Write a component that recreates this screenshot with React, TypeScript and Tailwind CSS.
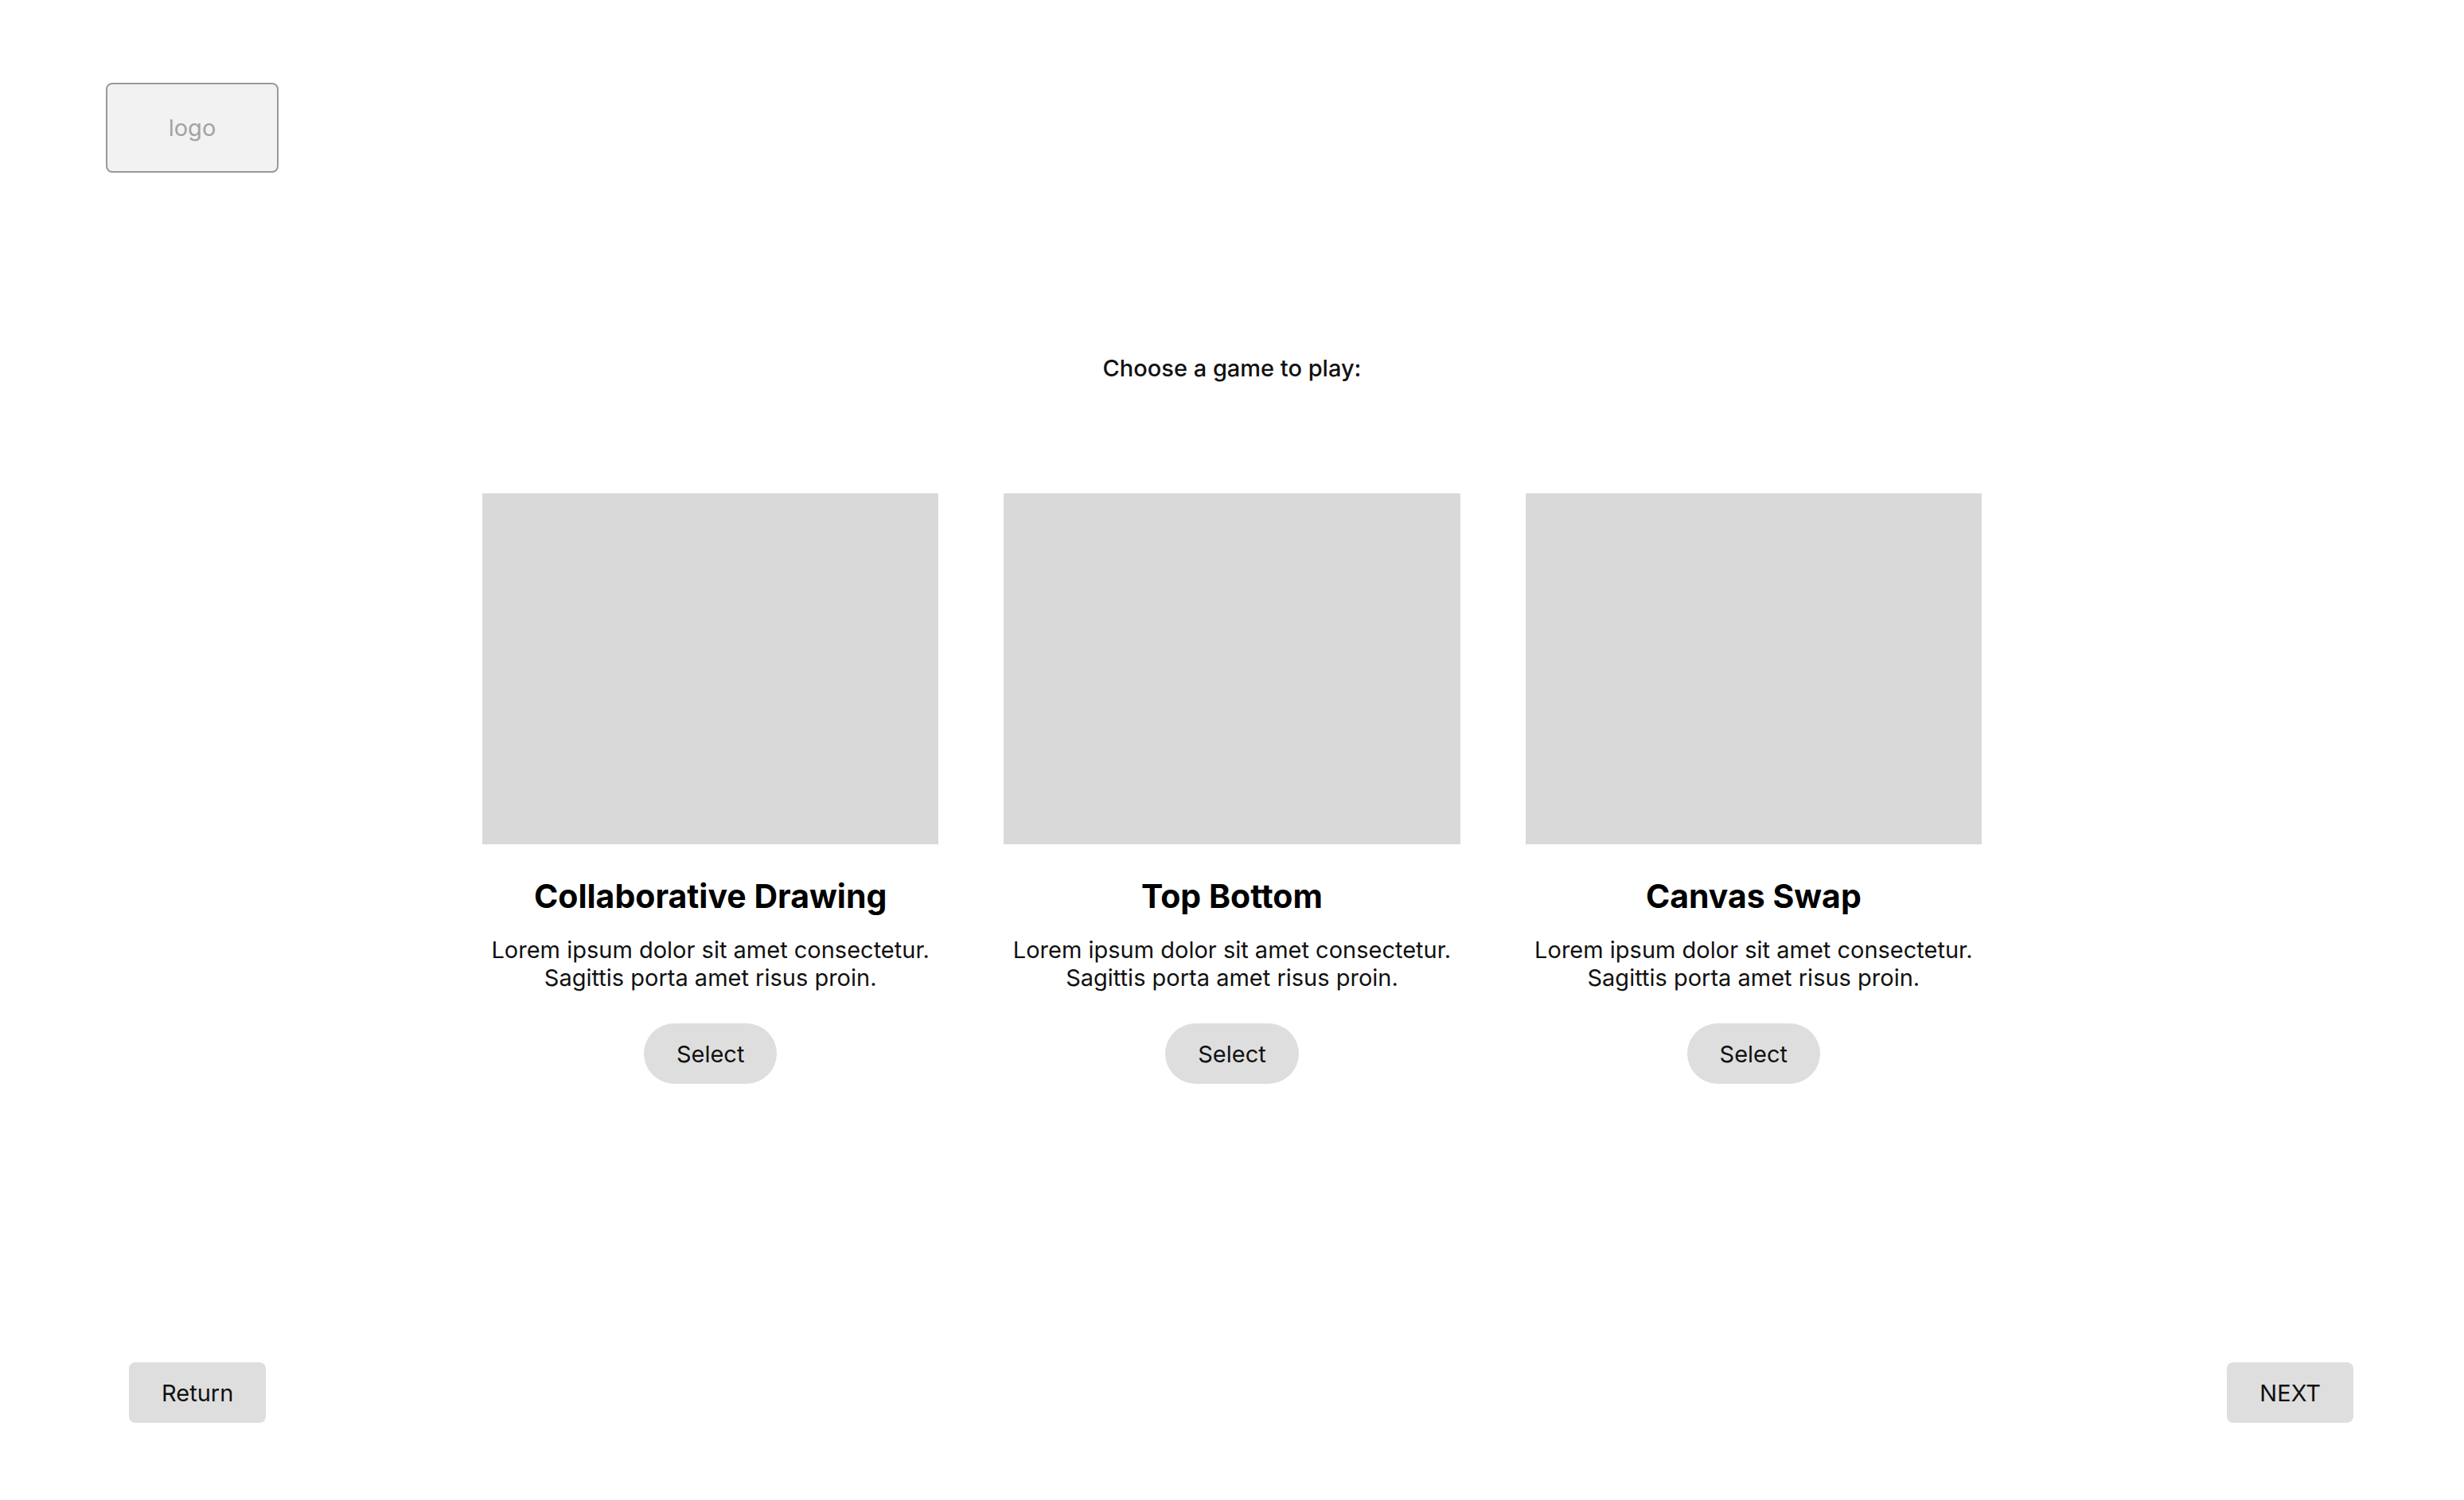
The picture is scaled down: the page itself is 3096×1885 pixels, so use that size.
const games = ['Collaborative Drawing', 'Top Bottom', 'Canvas Swap'];

export default function App() {
  return (
    <div className="flex min-h-screen flex-col bg-white font-['Inter',sans-serif] text-[29px] leading-[35px] text-[#111111]">
      <header className="flex px-[133px] pt-[104px]">
        <div className="flex h-[113px] w-[217px] items-center justify-center rounded-lg border-2 border-[#999999] bg-[#f2f2f2] text-[#a3a3a3]">
          logo
        </div>
      </header>
      <main className="flex flex-col items-center pt-[228px]">
        <h1 className="font-medium">Choose a game to play:</h1>
        <div className="mt-[140px] grid w-full max-w-[1884px] grid-cols-3 gap-[82px]">
          {games.map((game) => (
            <section key={game} className="flex flex-col items-center text-center">
              <div className="h-[441px] w-full bg-[#d9d9d9]" />
              <h2 className="mt-10 text-[41px] leading-[50px] font-bold text-black">{game}</h2>
              <p className="mt-[25px]">
                Lorem ipsum dolor sit amet consectetur. Sagittis porta amet risus proin.
              </p>
              <button type="button" className="mt-10 h-[76px] rounded-full bg-[#dedede] px-[41px]">
                Select
              </button>
            </section>
          ))}
        </div>
      </main>
      <footer className="mt-auto flex justify-between pr-[139px] pb-[97px] pl-[162px]">
        <button type="button" className="h-[76px] rounded-lg bg-[#dedede] px-[41px]">
          Return
        </button>
        <button type="button" className="h-[76px] rounded-lg bg-[#dedede] px-[41px]">
          NEXT
        </button>
      </footer>
    </div>
  );
}
